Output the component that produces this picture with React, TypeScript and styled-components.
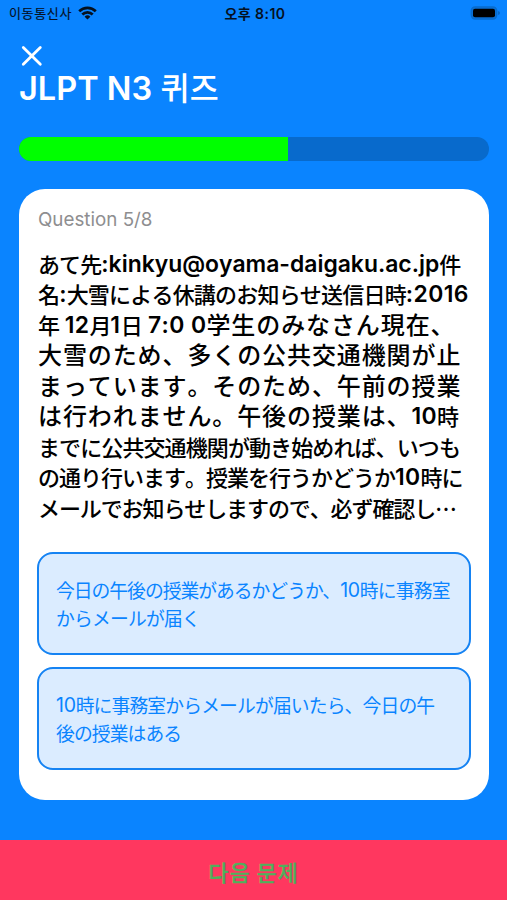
import React from 'react';
import styled, { createGlobalStyle } from 'styled-components';

const Global = createGlobalStyle`
  * { box-sizing: border-box; }
  body { margin: 0; background: #0a84ff; font-family: Inter, "Noto Sans CJK KR", sans-serif; }
`;
const Screen = styled.div`
  width: 507px; height: 900px; background: #0a84ff; display: flex; flex-direction: column; overflow: hidden;
`;
const StatusBar = styled.div`
  height: 28px; padding: 0 6px 0 9px; display: grid; grid-template-columns: 1fr auto 1fr; align-items: center;
  font-size: 13px; line-height: 26px; color: #05111f;
`;
const Carrier = styled.div`
  display: flex; align-items: center; gap: 6px; letter-spacing: 0.65px; padding-bottom: 2px;
  -webkit-text-stroke: 0.15px;
`;
const Clock = styled.div`
  font-size: 14px; font-weight: 600; letter-spacing: 0.45px; padding-bottom: 1px;
`;
const Battery = styled.svg`justify-self: end; margin-bottom: 2px;`;
const Wifi = styled.svg``;
const Header = styled.header`height: 109px; padding: 17px 19px 0; color: #fff;`;
const Close = styled.button`
  display: block; border: 0; background: none; padding: 0; margin-left: 2px; height: 22px; color: #fff;
  svg { display: block; }
`;
const Title = styled.h1`
  margin: 0; font-size: 32.5px; line-height: 44px; font-weight: 600; white-space: pre;
`;
const Hangul = styled.span`
  font-size: 31.5px; font-weight: 500; letter-spacing: 0.3px;
`;
const Progress = styled.div`
  flex: none; height: 24px; margin: 0 18px 0 19px; border-radius: 12px; overflow: hidden; background: #086acc;
`;
const Fill = styled.div`height: 100%; width: 268.5px; background: #00ff00;`;
const Card = styled.main`
  flex: none; height: 611px; margin: 28px 18px 0 19px; padding: 18px; border-radius: 26px; background: #fff;
`;
const Count = styled.div`
  padding: 1px 0 0 1px; font-size: 18.8px; line-height: 24px; height: 24px; color: #8e8e90;
`;
const Passage = styled.div`
  height: 276px; margin: 18px 0 28px 1px; color: #000; font-kerning: none;
`;
const PassageLine = styled.div`
  height: 30.45px; line-height: 30.45px; white-space: pre; display: flex;
`;
const Kanji = styled.span<{ $pitch: number; $size: number }>`
  font-family: "Noto Sans CJK JP", sans-serif; font-weight: 500; line-height: 28.2px; font-kerning: none;
  font-size: ${p => p.$size}px; letter-spacing: ${p => p.$pitch - p.$size}px;
`;
const Latin = styled.span<{ $track?: number }>`
  font-family: Inter, sans-serif; font-size: 22.9px; font-weight: 600; letter-spacing: ${p => p.$track ?? 0}px;
`;
const Answers = styled.div`
  display: flex; flex-direction: column; gap: 12px; margin-top: -1px;
`;
const Answer = styled.button`
  display: flex; flex-direction: column; justify-content: center; width: 434px; height: 103px; margin: 0; padding: 0 17px;
  border: 2px solid #1583f3; border-radius: 16px; background: #dbecff; color: #0a84ff;
`;
const AnswerLine = styled.span`
  display: flex; height: 27.3px; line-height: 27.3px; white-space: pre;
`;
const AnswerKanji = styled.span<{ $pitch: number }>`
  font: 400 18.8px/27.3px "Noto Sans CJK JP", sans-serif; letter-spacing: ${p => p.$pitch - 18.8}px;
`;
const AnswerLatin = styled.span`
  font: 400 19.5px/28.3px Inter, sans-serif; letter-spacing: -0.3px;
`;
const Next = styled.button`
  height: 60px; margin-top: auto; padding: 1px 0 0; border: 0; background: #ff375f; color: #4fb05c;
  font: 500 22px "Noto Sans CJK KR", sans-serif; letter-spacing: 0.9px; -webkit-text-stroke: 0.3px;
`;

type Run = { text: string; pitch?: number; size?: number; track?: number };

const passage: Run[][] = [
  [{ text: 'あて先', pitch: 21.1 }, { text: ':kinkyu@oyama-daigaku.ac.jp' }, { text: '件', pitch: 21.1 }],
  [{ text: '名', pitch: 21.3 }, { text: ':' }, { text: '大雪による休講のお知らせ送信日時', pitch: 21.2 }, { text: ':2016', track: 0.4 }],
  [
    { text: '年', pitch: 20.5 }, { text: ' 12', track: 0.4 }, { text: '月', pitch: 20.9 }, { text: '1', track: 0.8 },
    { text: '日', pitch: 21 }, { text: ' 7:0 0', track: 0.4 }, { text: '学生のみなさん現在、', pitch: 24.9, size: 24 },
  ],
  [{ text: '大雪のため、多くの公共交通機関が止', pitch: 24.9, size: 24 }],
  [{ text: 'まっています。そのため、午前の授業', pitch: 24.9, size: 24 }],
  [{ text: 'は行われません。午後の授業は、', pitch: 24.9, size: 24 }, { text: '10', track: 0.4 }, { text: '時', pitch: 21 }],
  [{ text: 'までに公共交通機関が動き始めれば、いつも', pitch: 21.1 }],
  [{ text: 'の通り行います。授業を行うかどうか', pitch: 21 }, { text: '10', track: 0.4 }, { text: '時に', pitch: 21 }],
  [{ text: 'メールでお知らせしますので、必ず確認し…', pitch: 20.9 }],
];

const answers: Run[][][] = [
  [
    [{ text: '今日の午後の授業があるかどうか、', pitch: 17.8 }, { text: '10' }, { text: '時に事務室', pitch: 18 }],
    [{ text: 'からメールが届く', pitch: 18 }],
  ],
  [
    [{ text: '10' }, { text: '時に事務室からメールが届いたら、今日の午', pitch: 17.95 }],
    [{ text: '後の授業はある', pitch: 17.9 }],
  ],
];

export default function App() {
  return (
    <>
      <Global />
      <Screen>
        <StatusBar>
          <Carrier>
            이동통신사
            <Wifi width="19" height="14" viewBox="0 0 19 14" fill="none" stroke="#05111f" strokeWidth="2.7">
              <path d="M1.2 5.2a11.8 11.8 0 0 1 16.6 0" />
              <path d="M4.3 8.5a7.4 7.4 0 0 1 10.4 0" />
              <path d="M9.5 13.6 6.6 10.7a4.1 4.1 0 0 1 5.8 0Z" fill="#05111f" stroke="none" />
            </Wifi>
          </Carrier>
          <Clock>오후 8:10</Clock>
          <Battery width="31" height="14" viewBox="0 0 31 14">
            <rect x="1.3" y="0.9" width="25.4" height="12.2" rx="4" fill="#0a6fd4" stroke="#086bcb" strokeWidth="1.4" />
            <rect x="3" y="2.7" width="22" height="8.6" rx="2" fill="#000" />
            <path d="M28.2 5v4q1.7-.5 1.7-2t-1.7-2Z" fill="#0863bd" />
          </Battery>
        </StatusBar>
        <Header>
          <Close aria-label="닫기">
            <svg width="22" height="22" viewBox="0 0 22 22" stroke="#fff" strokeWidth="2.8" strokeLinecap="round">
              <path d="M2.3 2.5 19.3 19.3M19.3 2.5 2.3 19.3" />
            </svg>
          </Close>
          <Title>JLPT N3 <Hangul>퀴즈</Hangul></Title>
        </Header>
        <Progress><Fill /></Progress>
        <Card>
          <Count>Question 5/8</Count>
          <Passage>
            {passage.map((line, i) => (
              <PassageLine key={i}>
                {line.map((r, j) => r.pitch
                  ? <Kanji key={j} $pitch={r.pitch} $size={r.size ?? 22}>{r.text}</Kanji>
                  : <Latin key={j} $track={r.track}>{r.text}</Latin>)}
              </PassageLine>
            ))}
          </Passage>
          <Answers>
            {answers.map((lines, i) => (
              <Answer key={i}>
                {lines.map((line, j) => (
                  <AnswerLine key={j}>
                    {line.map((r, k) => r.pitch
                      ? <AnswerKanji key={k} $pitch={r.pitch}>{r.text}</AnswerKanji>
                      : <AnswerLatin key={k}>{r.text}</AnswerLatin>)}
                  </AnswerLine>
                ))}
              </Answer>
            ))}
          </Answers>
        </Card>
        <Next>다음 문제</Next>
      </Screen>
    </>
  );
}
